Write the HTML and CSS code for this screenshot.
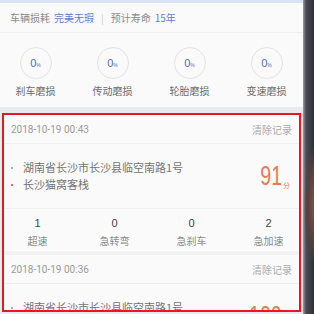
FILE: index.html
```html
<!DOCTYPE html>
<html lang="zh">
<head>
    <meta charset="UTF-8">
    <meta name="viewport" content="width=device-width, initial-scale=1.0">
    <title>车辆损耗</title>
    <link rel="stylesheet" href="styles.css">
</head>
<body>
    <div class="phone">
        <div class="screen">
            <div class="summary">
                <span>车辆损耗</span>
                <span class="blue">完美无瑕</span>
                <span class="sep">|</span>
                <span>预计寿命</span>
                <span class="blue">15年</span>
            </div>

            <div class="wear">
                <div class="wear-item">
                    <div class="circle">0<small>%</small></div>
                    <div class="wear-label">刹车磨损</div>
                </div>
                <div class="wear-item">
                    <div class="circle">0<small>%</small></div>
                    <div class="wear-label">传动磨损</div>
                </div>
                <div class="wear-item">
                    <div class="circle">0<small>%</small></div>
                    <div class="wear-label">轮胎磨损</div>
                </div>
                <div class="wear-item">
                    <div class="circle">0<small>%</small></div>
                    <div class="wear-label">变速磨损</div>
                </div>
            </div>

            <div class="records">
                <div class="record">
                    <div class="record-head">
                        <span class="date">2018-10-19 00:43</span>
                        <span class="clear">清除记录</span>
                    </div>
                    <div class="record-body">
                        <ul class="route">
                            <li>湖南省长沙市长沙县临空南路1号</li>
                            <li class="end">长沙猫窝客栈</li>
                        </ul>
                        <div class="score"><span class="num">91</span><small>分</small></div>
                    </div>
                    <div class="stats">
                        <div class="stat"><b>1</b><span>超速</span></div>
                        <div class="stat"><b>0</b><span>急转弯</span></div>
                        <div class="stat"><b>0</b><span>急刹车</span></div>
                        <div class="stat"><b>2</b><span>急加速</span></div>
                    </div>
                </div>

                <div class="record">
                    <div class="record-head">
                        <span class="date">2018-10-19 00:36</span>
                        <span class="clear">清除记录</span>
                    </div>
                    <div class="record-body">
                        <ul class="route">
                            <li>湖南省长沙市长沙县临空南路1号</li>
                            <li class="end">长沙猫窝客栈</li>
                        </ul>
                        <div class="score"><span class="num">100</span><small>分</small></div>
                    </div>
                </div>
            </div>
        </div>
        <div class="bezel"></div>
    </div>
</body>
</html>
```

FILE: styles.css
```css
body {
    margin: 0;
    font-family: "Noto Sans CJK SC", "Noto Sans", sans-serif;
    background-color: #3b3d44;
}

.phone {
    display: flex;
    width: 314px;
    height: 314px;
    overflow: hidden;
}

.screen {
    width: 303px;
    height: 311px;
    flex-shrink: 0;
    background-color: #e9eaee;
    border-top: 3px solid #d6e4f4;
    overflow: hidden;
}

.bezel {
    flex: 1;
    background:
        radial-gradient(ellipse 10px 60px at 100% 205px, #7a5548 0, #5a4039 60%, transparent 100%),
        linear-gradient(to right, #9a9ca4 0, #4a4c55 3px, #2f3038 100%);
}

.summary {
    display: flex;
    align-items: center;
    gap: 4px;
    height: 29px;
    padding-left: 10px;
    font-size: 10px;
    color: #8a8a8a;
    background-color: #fafafa;
    border-bottom: 1px solid #eeeeee;
}

.summary .blue {
    color: #5a7fd6;
}

.summary .sep {
    color: #cccccc;
    margin: 0 3px;
}

.wear {
    display: grid;
    grid-template-columns: repeat(4, 77px);
    margin-left: -3px;
    padding-top: 14px;
    height: 60px;
    background-color: #fafafa;
}

.wear-item {
    display: flex;
    flex-direction: column;
    align-items: center;
}

.circle {
    width: 30px;
    height: 30px;
    border: 1px solid #e3e3e3;
    border-radius: 50%;
    display: flex;
    align-items: center;
    justify-content: center;
    font-family: "Liberation Sans", sans-serif;
    font-size: 11px;
    color: #4f6fc0;
}

.circle small {
    font-size: 5px;
    margin-top: 3px;
}

.wear-label {
    margin-top: 4px;
    font-size: 10px;
    color: #6b6b6b;
}

.records {
    box-sizing: border-box;
    height: 199px;
    margin: 6px 2px 0;
    border: 2px solid #f0141e;
    background-color: #f2f2f2;
    overflow: hidden;
}

.record {
    background-color: #fafafa;
    margin-bottom: 4px;
}

.record-head {
    display: flex;
    justify-content: space-between;
    align-items: center;
    height: 28px;
    padding: 0 7px;
    font-size: 10px;
    border-bottom: 1px solid #efefef;
}

.date {
    font-family: "Roboto", sans-serif;
    color: #9a9a9a;
}

.clear {
    color: #ababab;
}

.record-body {
    display: flex;
    justify-content: space-between;
    align-items: center;
    height: 64px;
    padding: 0 9px 0 6px;
}

.route {
    list-style: none;
    margin: 0;
    padding: 0;
    font-size: 11px;
    color: #747474;
    line-height: 17px;
}

.route li::before {
    content: "";
    display: inline-block;
    width: 2px;
    height: 2px;
    margin: 0 10px 3px 1px;
    background-color: #9bb0d8;
    vertical-align: middle;
}

.route li.end::before {
    background-color: #e56a6a;
}

.score {
    display: flex;
    align-items: flex-end;
    color: #ea7a50;
}

.score .num {
    display: inline-block;
    font-family: "Liberation Sans", sans-serif;
    font-size: 28px;
    line-height: 28px;
    transform: scaleX(0.7);
    transform-origin: right bottom;
}

.score small {
    font-size: 7px;
    line-height: 10px;
    margin-left: 1px;
}

.stats {
    display: grid;
    grid-template-columns: repeat(4, 77px);
    margin-left: -5px;
    padding: 7px 0 3px;
    border-top: 1px solid #efefef;
}

.stat {
    display: flex;
    flex-direction: column;
    align-items: center;
    gap: 4px;
    line-height: 14px;
}

.stat b {
    font-family: "Liberation Sans", sans-serif;
    font-weight: normal;
    font-size: 11px;
    color: #444444;
}

.stat span {
    font-size: 10px;
    color: #8a8a8a;
}
```
